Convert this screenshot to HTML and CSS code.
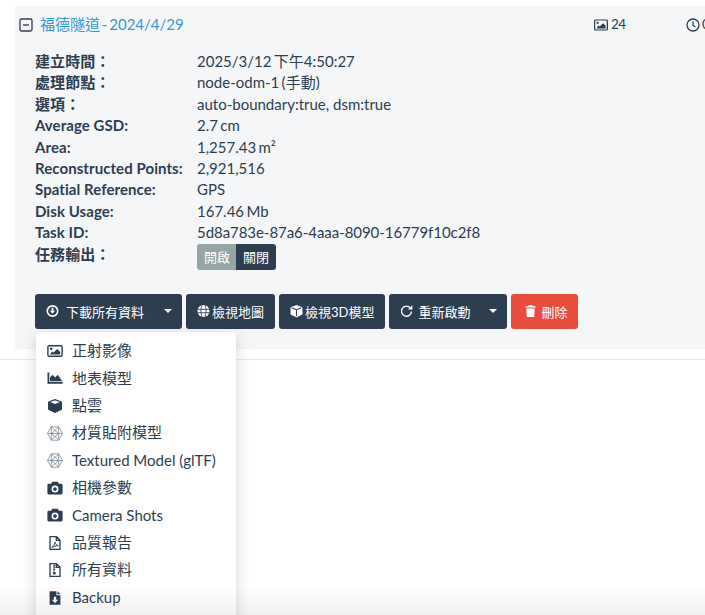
FILE: index.html
```html
<!DOCTYPE html>
<html lang="zh-Hant">
<head>
<meta charset="utf-8">
<title>福德隧道</title>
<link rel="stylesheet" href="styles.css">
</head>
<body>
<section class="panel">
  <header class="head">
    <svg class="toggle" viewBox="0 0 14 14"><rect x="1" y="1" width="12" height="12" rx="1.5" fill="none" stroke="#2c3e50" stroke-width="1.3"/><path d="M4 7h6" stroke="#2c3e50" stroke-width="1.4"/></svg>
    <a class="name">福德隧道 - 2024/4/29</a>
    <span class="stat images"><svg class="ic" viewBox="0 0 14 12"><rect x=".6" y="1" width="12.8" height="10" rx="1" fill="none" stroke="#2c3e50" stroke-width="1.2"/><circle cx="3.6" cy="3.8" r="1.1" fill="#2c3e50"/><path d="M2.4 9.4h9.2V6.8L9 4.2 5.8 7.4 4.6 6.2z" fill="#2c3e50"/></svg>24</span>
    <span class="stat clock"><svg class="ic" viewBox="0 0 14 14"><circle cx="7" cy="7" r="6" fill="none" stroke="#2c3e50" stroke-width="1.3"/><path d="M7 3.2V7.4l2.4 1.6" fill="none" stroke="#2c3e50" stroke-width="1.2"/></svg>00:03:12</span>
  </header>
  <dl class="info">
    <dt>建立時間：</dt><dd>2025/3/12 下午4:50:27</dd>
    <dt>處理節點：</dt><dd>node-odm-1 (手動)</dd>
    <dt>選項：</dt><dd class="plain">auto-boundary:true, dsm:true</dd>
    <dt>Average GSD:</dt><dd>2.7 cm</dd>
    <dt>Area:</dt><dd>1,257.43 m²</dd>
    <dt>Reconstructed Points:</dt><dd>2,921,516</dd>
    <dt>Spatial Reference:</dt><dd>GPS</dd>
    <dt>Disk Usage:</dt><dd>167.46 Mb</dd>
    <dt>Task ID:</dt><dd class="tid">5d8a783e-87a6-4aaa-8090-16779f10c2f8</dd>
    <dt>任務輸出：</dt><dd><span class="switch"><span class="sw off">開啟</span><span class="sw on">關閉</span></span></dd>
  </dl>
  <div class="actions">
    <div class="split">
      <button class="btn main dl"><svg class="ic" viewBox="0 0 14 14"><path fill-rule="evenodd" d="M7 .5a6.500 6.500 0 1 1 0 13 6.500 6.500 0 0 1 0-13zM7 2.300a4.700 4.700 0 1 0 0 9.400 4.700 4.700 0 0 0 0-9.400z" fill="#fff"/><path d="M6 3.600h2v3h1.800L7 10 4.200 6.600H6z" fill="#fff"/></svg>下載所有資料</button>
      <button class="btn caret"><i></i></button>
    </div>
    <button class="btn"><svg class="ic" viewBox="0 0 14 14"><circle cx="7" cy="7" r="6.500" fill="#fff"/><path d="M.5 5.200h13M.5 8.800h13M5.400 .8c-1.600 3.800-1.600 8.600 0 12.400M8.600 .8c1.600 3.800 1.600 8.600 0 12.400" stroke="#2c3e50" stroke-width=".9" fill="none"/></svg>檢視地圖</button>
    <button class="btn"><svg class="ic" viewBox="0 0 14 14"><path d="M7 1l6 2.200v7.400L7 13.400 1 10.600V3.200z" fill="#fff" stroke="#fff" stroke-width=".8" stroke-linejoin="round"/><path d="M1.800 3.500L7 5.700l5.200-2.200M7 5.700v6.800" stroke="#2c3e50" stroke-width="1.100" fill="none"/></svg>檢視3D模型</button>
    <div class="split">
      <button class="btn main re"><svg class="ic" viewBox="0 0 14 14"><path d="M11.300 3.900A5.400 5.400 0 1 0 12.400 7.600" fill="none" stroke="#fff" stroke-width="1.500"/><path d="M8.700 5.300h4.600V.7z" fill="#fff"/></svg>重新啟動</button>
      <button class="btn caret"><i></i></button>
    </div>
    <button class="btn danger"><svg class="ic" viewBox="0 0 12 14"><path d="M4 .5h4l.6 1.200H11.500v1.600H.5V1.700h2.900zM1.300 4.300h9.400l-.7 9.200H2z" fill="#fff"/></svg>刪除</button>
  </div>
</section>
<hr class="rule">
<ul class="menu">
  <li><svg class="mi" viewBox="0 0 16 14"><rect x=".9" y="1.700" width="14.200" height="10.600" rx="1.200" fill="none" stroke="#2c3e50" stroke-width="1.400"/><circle cx="4.200" cy="4.700" r="1.300" fill="#2c3e50"/><path d="M2.800 10.500h10.400V8L10.200 5 6.500 8.600 5.200 7.400z" fill="#2c3e50"/></svg>正射影像</li>
  <li><svg class="mi" viewBox="0 0 16 14"><path d="M.5 1.500h1.800v9.500h13.300v1.700H.5z" fill="#2c3e50"/><path d="M3 10.300V6.500l2.600-2.800 2.600 2.800L10.700 3.800l4.600 6.500z" fill="#2c3e50"/></svg>地表模型</li>
  <li><svg class="mi" viewBox="0 0 16 14"><path d="M8 .5l6.500 2.400v7.500L8 13.500l-6.500-3.100V2.900z" fill="#2c3e50" stroke="#2c3e50" stroke-width="1" stroke-linejoin="round"/><path d="M3.100 3.100L8 5 12.900 3.100 8 1.400z" fill="#fff"/></svg>點雲</li>
  <li><svg class="mi hex" viewBox="0 0 16 15"><g fill="none" stroke="#7f8a92" stroke-width=".8"><path d="M4.300 .8h7.400L15.500 7.500l-3.800 6.700H4.300L.5 7.500z"/><path d="M4.300 .8L8 4.400 11.700 .8M.5 7.500H15.500M4.300 14.200L8 10.600l3.700 3.600M8 4.400L4.300 7.500 8 10.600 11.700 7.500zM4.300 .8v6.700M11.700 .8v6.700M4.300 7.500v6.700M11.700 7.500v6.700"/></g></svg>材質貼附模型</li>
  <li><svg class="mi hex" viewBox="0 0 16 15"><g fill="none" stroke="#7f8a92" stroke-width=".8"><path d="M4.300 .8h7.400L15.500 7.500l-3.800 6.700H4.300L.5 7.500z"/><path d="M4.300 .8L8 4.400 11.700 .8M.5 7.500H15.500M4.300 14.200L8 10.600l3.700 3.600M8 4.400L4.300 7.500 8 10.600 11.700 7.500zM4.300 .8v6.700M11.700 .8v6.700M4.300 7.500v6.700M11.700 7.500v6.700"/></g></svg>Textured Model (glTF)</li>
  <li><svg class="mi" viewBox="0 0 16 14"><path fill-rule="evenodd" d="M5.200 .8h5.600l1 2h2.500c.7 0 1.300.6 1.300 1.300v8c0 .7-.6 1.300-1.300 1.300H1.700c-.7 0-1.300-.6-1.300-1.300v-8c0-.7.6-1.300 1.300-1.300h2.500zM8 4.600a3.500 3.500 0 1 0 0 7 3.500 3.500 0 0 0 0-7z" fill="#2c3e50"/><circle cx="8" cy="8.100" r="1.900" fill="#2c3e50"/></svg>相機參數</li>
  <li><svg class="mi" viewBox="0 0 16 14"><path fill-rule="evenodd" d="M5.200 .8h5.600l1 2h2.500c.7 0 1.300.6 1.300 1.300v8c0 .7-.6 1.300-1.300 1.300H1.700c-.7 0-1.300-.6-1.300-1.300v-8c0-.7.6-1.300 1.300-1.300h2.500zM8 4.600a3.500 3.500 0 1 0 0 7 3.500 3.500 0 0 0 0-7z" fill="#2c3e50"/><circle cx="8" cy="8.100" r="1.900" fill="#2c3e50"/></svg>Camera Shots</li>
  <li><svg class="mi" viewBox="0 0 16 14"><path d="M3 .7h6.500L13 4.200v9.100H3zM9.300 .9v3.500H13" fill="none" stroke="#2c3e50" stroke-width="1.300"/><path d="M4.700 11.500c2-1 3-3 3.300-5.500.4 2 1.500 3.300 3.300 3.700-2.500 0-4.500.6-6.600 1.800z" fill="none" stroke="#2c3e50" stroke-width=".9"/></svg>品質報告</li>
  <li><svg class="mi" viewBox="0 0 16 14"><path d="M3 .7h6.500L13 4.200v9.100H3zM9.300 .9v3.500H13" fill="none" stroke="#2c3e50" stroke-width="1.300"/><path d="M7 1.500v6.500M6.900 2.500h1.300M6.900 4.500h1.300M6.900 6.500h1.300" stroke="#2c3e50" stroke-width="1"/><circle cx="7.300" cy="10" r="1.500" fill="#2c3e50"/></svg>所有資料</li>
  <li><svg class="mi" viewBox="0 0 16 14"><path fill-rule="evenodd" d="M2.600 .2h6.800v4h4v9.600H2.600zM6.800 5.800v3H4.900L8 12.200l3.100-3.400H9.200v-3z" fill="#2c3e50"/><path d="M10.300 .2l3.100 3.100h-3.100z" fill="#2c3e50"/></svg>Backup</li>
</ul>
</body>
</html>
```
FILE: styles.css
```css
* { box-sizing: border-box; }
html, body { margin: 0; padding: 0; }
body {
  width: 705px;
  height: 615px;
  overflow: hidden;
  position: relative;
  background: #fff;
  color: #2c3e50;
  font-family: Lato, "Noto Sans CJK TC", sans-serif;
  font-size: 15px;
  line-height: 21.4px;
}
body::after {
  content: "";
  position: absolute;
  left: 0;
  right: 0;
  bottom: 0;
  height: 30px;
  background: linear-gradient(to bottom, rgba(0, 0, 0, 0), rgba(0, 0, 0, .06));
  pointer-events: none;
}
.panel {
  margin: 6px 0 0 15px;
  width: 690px;
  height: 343px;
  background: #f5f6f7;
  padding: 8px 0 0 4px;
  overflow: hidden;
}
.head {
  display: flex;
  align-items: center;
  height: 22px;
  white-space: nowrap;
}
.toggle { width: 14px; height: 14px; flex: none; }
.name { margin-left: 7px; color: #3498db; font-size: 15px; word-spacing: -2px; width: 553px; flex: none; }
.stat { display: inline-flex; align-items: center; font-size: 13.5px; flex: none; }
.images { width: 93px; padding-left: 1px; letter-spacing: -.6px; }
.images .ic { margin-right: 3px; }
.ic { width: 14px; height: 14px; margin-right: 2px; flex: none; }
.info {
  display: grid;
  grid-template-columns: 162px 1fr;
  margin: 15px 0 0 16px;
  row-gap: 0;
}
.info dt { font-weight: 700; margin: 0; letter-spacing: .07px; }
.info dd { margin: 0; word-spacing: -1.5px; }
.info .plain { word-spacing: 0; }
.info .tid { letter-spacing: -.05px; }
.switch {
  display: inline-flex;
  border-radius: 3px;
  overflow: hidden;
  height: 26px;
  font-size: 13px;
  line-height: 26px;
  color: #fff;
}
.sw { padding: 0 7px; }
.off { background: #95a5a6; padding-right: 6px; }
.on { background: #2c3e50; }
.actions {
  display: flex;
  gap: 4px;
  margin: 24px 0 0 16px;
}
.split { display: flex; }
.btn {
  display: inline-flex;
  align-items: center;
  height: 35px;
  padding: 0 11px;
  border: 0;
  border-radius: 3px;
  background: #2c3e50;
  color: #fff;
  font-family: inherit;
  font-size: 13px;
  white-space: nowrap;
}
.btn .ic { width: 13px; }
.main { border-radius: 3px 0 0 3px; }
.main .ic { margin-right: 7px; }
.dl { width: 122px; }
.re { width: 93px; }
.re .ic { margin-right: 5px; }
.caret { border-radius: 0 3px 3px 0; width: 25px; justify-content: center; padding: 0 3px 0 0; }
.caret i {
  width: 0;
  height: 0;
  border-left: 4px solid transparent;
  border-right: 4px solid transparent;
  border-top: 4px solid #fff;
}
.danger { background: #e74c3c; padding: 0 11px 0 14px; }
.danger .ic { width: 11px; margin-right: 5px; }
.rule {
  margin: 10px 0 0;
  border: 0;
  border-top: 1px solid #e7e9eb;
}
.menu {
  position: absolute;
  left: 36px;
  top: 332px;
  width: 200px;
  height: 300px;
  margin: 0;
  padding: 5.300px 0 0 11px;
  list-style: none;
  background: #fff;
  border-radius: 4px;
  box-shadow: 0 4px 16px rgba(0, 0, 0, .17);
  font-size: 15px;
}
.menu li {
  display: flex;
  align-items: center;
  height: 27.400px;
  white-space: nowrap;
}
.mi { width: 16px; height: 14px; margin-right: 9px; flex: none; }
.mi.hex { height: 15px; }
```
